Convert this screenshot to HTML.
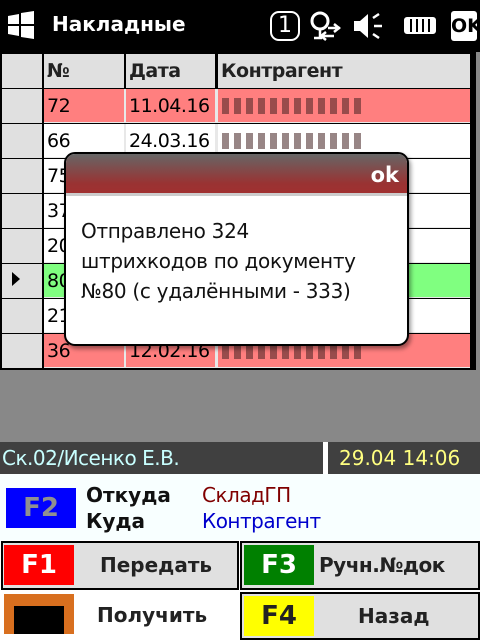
<html><head><style>
body{margin:0;width:480px;height:640px;overflow:hidden;background:#fff;font-family:"DejaVu Sans","Liberation Sans",sans-serif;position:relative}
div{position:absolute;box-sizing:border-box}
.c{font-size:19px;color:#000;line-height:34px;padding-left:3px;white-space:nowrap;overflow:hidden;letter-spacing:-0.5px}
.b{font-weight:bold}
</style></head><body>
<div style="left:0;top:0;width:480px;height:52px;background:#000"></div>
<svg style="position:absolute;left:6px;top:10px" width="30" height="30" viewBox="0 0 30 30"><path d="M2 6 L13 4 L13 14 L2 14Z M15 3 L28 1 L28 14 L15 14Z M2 16 L13 16 L13 26 L2 24Z M15 16 L28 16 L28 29 L15 27Z" fill="#fff"/></svg>
<div class="b" style="left:52px;top:12px;color:#fff;font-size:20px">Накладные</div>
<div style="left:270px;top:11px;width:30px;height:30px;border:2px solid #fff;border-radius:9px;color:#fff;font-size:22px;text-align:center;line-height:26px">1</div>
<svg style="position:absolute;left:308px;top:10px" width="36" height="32"><circle cx="12" cy="11" r="8" stroke="#fff" stroke-width="3" fill="none"/><path d="M12 19v8M6 28h8M20 18h12M26 14l5 4-5 4M14 26h12M18 22l-5 4 5 4" stroke="#fff" stroke-width="2.5" fill="none"/></svg>
<svg style="position:absolute;left:352px;top:12px" width="32" height="28"><path d="M2 9h6l8-7v24l-8-7H2z" fill="#fff"/><path d="M21 6l6-4M22 14h8M21 22l6 4" stroke="#fff" stroke-width="2.5"/></svg>
<div style="left:404px;top:17px;width:32px;height:17px;border:2px solid #fff;border-radius:3px;background:repeating-linear-gradient(90deg,#fff 0 4px,#000 4px 6px)"></div>
<div class="b" style="left:451px;top:11px;width:26px;height:30px;background:#fff;color:#000;font-size:19px;line-height:30px;text-align:center;border-radius:3px">OK</div>

<div style="left:0;top:52px;width:480px;height:390px;background:#888"></div>
<div style="left:0;top:52px;width:470px;height:318px;background:#000"></div>
<div style="left:470px;top:52px;width:6px;height:318px;background:#000"></div>
<div style="left:2px;top:54px;width:40px;height:34px;background:#e0e0e0"></div>
<div class="c b" style="left:44px;top:54px;width:80px;height:34px;background:#e0e0e0;color:#222">№</div>
<div class="c b" style="left:126px;top:54px;width:89px;height:34px;background:#e0e0e0;color:#222">Дата</div>
<div class="c b" style="left:218px;top:54px;width:252px;height:34px;background:#e0e0e0;color:#222">Контрагент</div>

<div id="rows"></div>
<script>
var r=[["72","11.04.16","#ff7f7f"],["66","24.03.16","#fff"],["75","","#fff"],["37","","#fff"],["20","","#fff"],["80","","#80ff80"],["21","","#fff"],["36","12.02.16","#ff7f7f"]];
var h="";
for(var i=0;i<8;i++){var t=89+i*35;
h+='<div style="left:2px;top:'+t+'px;width:40px;height:34px;background:#e0e0e0"></div>';
h+='<div style="left:44px;top:'+t+'px;width:426px;height:34px;background:#e8e8e8"></div>';
h+='<div class="c" style="left:44px;top:'+t+'px;width:80px;height:33px;background:'+r[i][2]+'">'+r[i][0]+'</div>';
h+='<div class="c" style="left:126px;top:'+t+'px;width:89px;height:33px;background:'+r[i][2]+'">'+r[i][1]+'</div>';
h+='<div style="left:218px;top:'+t+'px;width:252px;height:33px;background:'+r[i][2]+'"></div>';
if(r[i][2]!="#80ff80"&&i!=3)h+='<div style="left:222px;top:'+(t+9)+'px;width:140px;height:16px;background:repeating-linear-gradient(90deg,#442222 0 7px,transparent 7px 12px);opacity:.55"></div>';
}
h+='<svg style="position:absolute;left:10px;top:271px" width="12" height="16"><path d="M2 1L10 8L2 15Z" fill="#000"/></svg>';
document.getElementById("rows").innerHTML=h;
</script>

<div style="left:64px;top:152px;width:345px;height:194px;background:#fff;border:2px solid #000;border-radius:11px;overflow:hidden;box-shadow:2px 3px 4px rgba(0,0,0,.4)">
<div style="left:0;top:0;width:341px;height:42px;background:linear-gradient(#666,#993333 75%,#a03030);border-bottom:3px solid #ccc"></div>
<div class="b" style="right:8px;top:9px;color:#fff;font-size:21px">ok</div>
<div style="left:15px;top:62px;font-size:20px;line-height:30px;color:#111;letter-spacing:-0.3px">Отправлено 324<br>штрихкодов по документу<br>№80 (с удалёнными - 333)</div>
</div>

<div style="left:0;top:442px;width:323px;height:32px;background:#404040;color:#c8ffff;font-size:20px;line-height:32px;padding-left:2px;letter-spacing:-0.5px">Ск.02/Исенко Е.В.</div>
<div style="left:328px;top:442px;width:152px;height:32px;background:#404040;color:#ffff80;font-size:20px;line-height:32px;padding-left:11px">29.04 14:06</div>

<div style="left:0;top:474px;width:480px;height:66px;background:#f8ffff"></div>
<div class="b" style="left:6px;top:488px;width:70px;height:40px;background:#0000ff;color:#909090;font-size:26px;line-height:40px;text-align:center">F2</div>
<div class="b" style="left:86px;top:482px;font-size:20px;line-height:26px;color:#111">Откуда<br>Куда</div>
<div style="left:202px;top:482px;font-size:20px;line-height:26px;color:#800000;letter-spacing:-0.5px">СкладГП</div>
<div style="left:202px;top:508px;font-size:20px;line-height:26px;color:#0000cc;letter-spacing:-0.5px">Контрагент</div>

<div style="left:1px;top:541px;width:238px;height:49px;border:2px solid #000;background:#e0e0e0"></div>
<div class="b" style="left:4px;top:545px;width:70px;height:40px;background:#f00;color:#fff;font-size:26px;line-height:40px;text-align:center">F1</div>
<div class="b" style="left:100px;top:545px;font-size:20px;line-height:40px;color:#222">Передать</div>
<div style="left:240px;top:541px;width:240px;height:49px;border:2px solid #000;background:#e0e0e0"></div>
<div class="b" style="left:244px;top:545px;width:70px;height:40px;background:#008000;color:#fff;font-size:26px;line-height:40px;text-align:center">F3</div>
<div class="b" style="left:319px;top:545px;font-size:20px;line-height:40px;color:#222;letter-spacing:-0.5px">Ручн.№док</div>

<div style="left:4px;top:594px;width:70px;height:40px;background:#d86f1f"></div>
<div style="left:14px;top:606px;width:50px;height:28px;background:#000"></div>
<div class="b" style="left:97px;top:594px;font-size:20px;line-height:42px;color:#222">Получить</div>
<div style="left:240px;top:592px;width:240px;height:48px;border:2px solid #000;background:#e0e0e0"></div>
<div class="b" style="left:244px;top:596px;width:70px;height:40px;background:#ff0;color:#222;font-size:26px;line-height:40px;text-align:center">F4</div>
<div class="b" style="left:358px;top:596px;font-size:20px;line-height:40px;color:#222">Назад</div>
</body></html>
